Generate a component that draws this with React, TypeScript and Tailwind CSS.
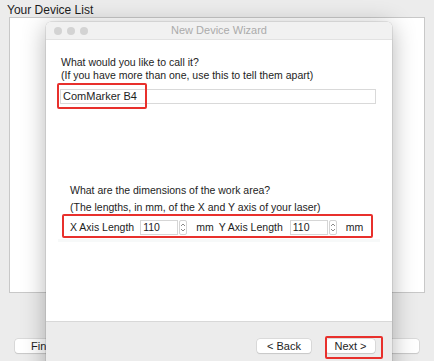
import React from 'react';

function Spinner() {
  return (
    <div className="flex h-[15px] w-[8px] items-center justify-center rounded-[2px] border border-[#d4d4d4] bg-white">
      <svg width="6" height="11" viewBox="0 0 6 11" fill="none" stroke="#8a8a8a" strokeWidth="1">
        <path d="M1 4 L3 2 L5 4" />
        <path d="M1 7 L3 9 L5 7" />
      </svg>
    </div>
  );
}

function NumberField({ value }: { value: string }) {
  return (
    <div className="flex items-center gap-[1px]">
      <div className="flex h-[15px] w-[38px] items-center border border-[#d6d6d6] bg-white pl-[2px] text-[10.5px] leading-none">
        {value}
      </div>
      <Spinner />
    </div>
  );
}

export default function App() {
  return (
    <div className="relative h-[361px] w-[434px] overflow-hidden bg-[#ececec] font-['Liberation_Sans',Arial,sans-serif] text-[#1d1d1d]">
      {/* main window behind */}
      <div className="px-[7px] pt-[4px] text-[12px] leading-[13px]">Your Device List</div>
      <div className="mx-[9px] h-[276px] border border-[#c8c8c8] bg-white" />
      <div className="mt-[46px] flex justify-between px-[15px]">
        <div className="flex h-[14px] w-[60px] items-center rounded-[3px] bg-white pl-[16px] text-[11px] shadow-[0_0_0_0.5px_#c8c8c8,0_1px_1px_rgba(0,0,0,0.15)]">
          Find
        </div>
        <div className="h-[14px] w-[60px] rounded-[3px] bg-white shadow-[0_0_0_0.5px_#c8c8c8,0_1px_1px_rgba(0,0,0,0.15)]" />
      </div>

      {/* wizard dialog */}
      <div className="absolute left-[46px] top-[22px] flex h-[360px] w-[346px] flex-col overflow-hidden rounded-t-[5px] bg-white shadow-[0_4px_24px_rgba(0,0,0,0.3),0_0_0_0.5px_rgba(0,0,0,0.15)]">
        <div className="relative flex h-[18px] items-center justify-center border-b border-[#e2e2e2] bg-[#f1f1f1]">
          <div className="absolute left-[8px] top-[5px] flex gap-[5px]">
            <span className="h-[8px] w-[8px] rounded-full bg-[#d3d3d3]" />
            <span className="h-[8px] w-[8px] rounded-full bg-[#d3d3d3]" />
            <span className="h-[8px] w-[8px] rounded-full bg-[#d3d3d3]" />
          </div>
          <span className="text-[11px] text-[#ababab]">New Device Wizard</span>
        </div>

        <div className="relative h-[281px] bg-white">
          <div className="pl-[15px] pt-[16px] text-[10.5px] leading-[13px]">
            <p>What would you like to call it?</p>
            <p>(If you have more than one, use this to tell them apart)</p>
          </div>
          <div className="ml-[14px] mt-[7px] flex h-[15px] w-[316px] items-center border border-[#d9d9d9] pl-[2px] text-[11px] leading-none">
            ComMarker B4
          </div>

          <div className="pl-[24px] pt-[80px] text-[10.5px] leading-[13px]">
            <p>What are the dimensions of the work area?</p>
            <p className="mt-[4px]">(The lengths, in mm, of the X and Y axis of your laser)</p>
          </div>
          <div className="ml-[24px] mt-[6px] flex items-center text-[10.5px] leading-none">
            <span className="mr-[6px]">X Axis Length</span>
            <NumberField value="110" />
            <span className="ml-[9px] mr-[5px]">mm</span>
            <span className="mr-[7px]">Y Axis Length</span>
            <NumberField value="110" />
            <span className="ml-[9px]">mm</span>
          </div>
          <div className="mx-[12px] mt-[4px] h-[3px] bg-[#f7f9f9]" />

          {/* highlight boxes */}
          <div className="absolute left-[11px] top-[43px] h-[26px] w-[90px] rounded-[2px] border-2 border-[#e8302c]" />
          <div className="absolute left-[16px] top-[174px] h-[24px] w-[311px] rounded-[2px] border-2 border-[#e8302c]" />
        </div>

        <div className="relative flex flex-1 justify-end gap-[15px] border-t border-[#d8d8d8] bg-[#ececec] pr-[17px] pt-[17px]">
          <div className="flex h-[14px] w-[54px] items-center justify-center rounded-[3px] bg-white text-[11px] shadow-[0_0_0_0.5px_#c8c8c8,0_1px_1px_rgba(0,0,0,0.15)]">
            &lt; Back
          </div>
          <div className="flex h-[14px] w-[49px] items-center justify-center rounded-[3px] bg-white text-[11px] shadow-[0_0_0_0.5px_#c8c8c8,0_1px_1px_rgba(0,0,0,0.15)]">
            Next &gt;
          </div>
          <div className="absolute left-[279px] top-[14px] h-[23px] w-[58px] rounded-[2px] border-2 border-[#e8302c]" />
        </div>
      </div>
    </div>
  );
}
